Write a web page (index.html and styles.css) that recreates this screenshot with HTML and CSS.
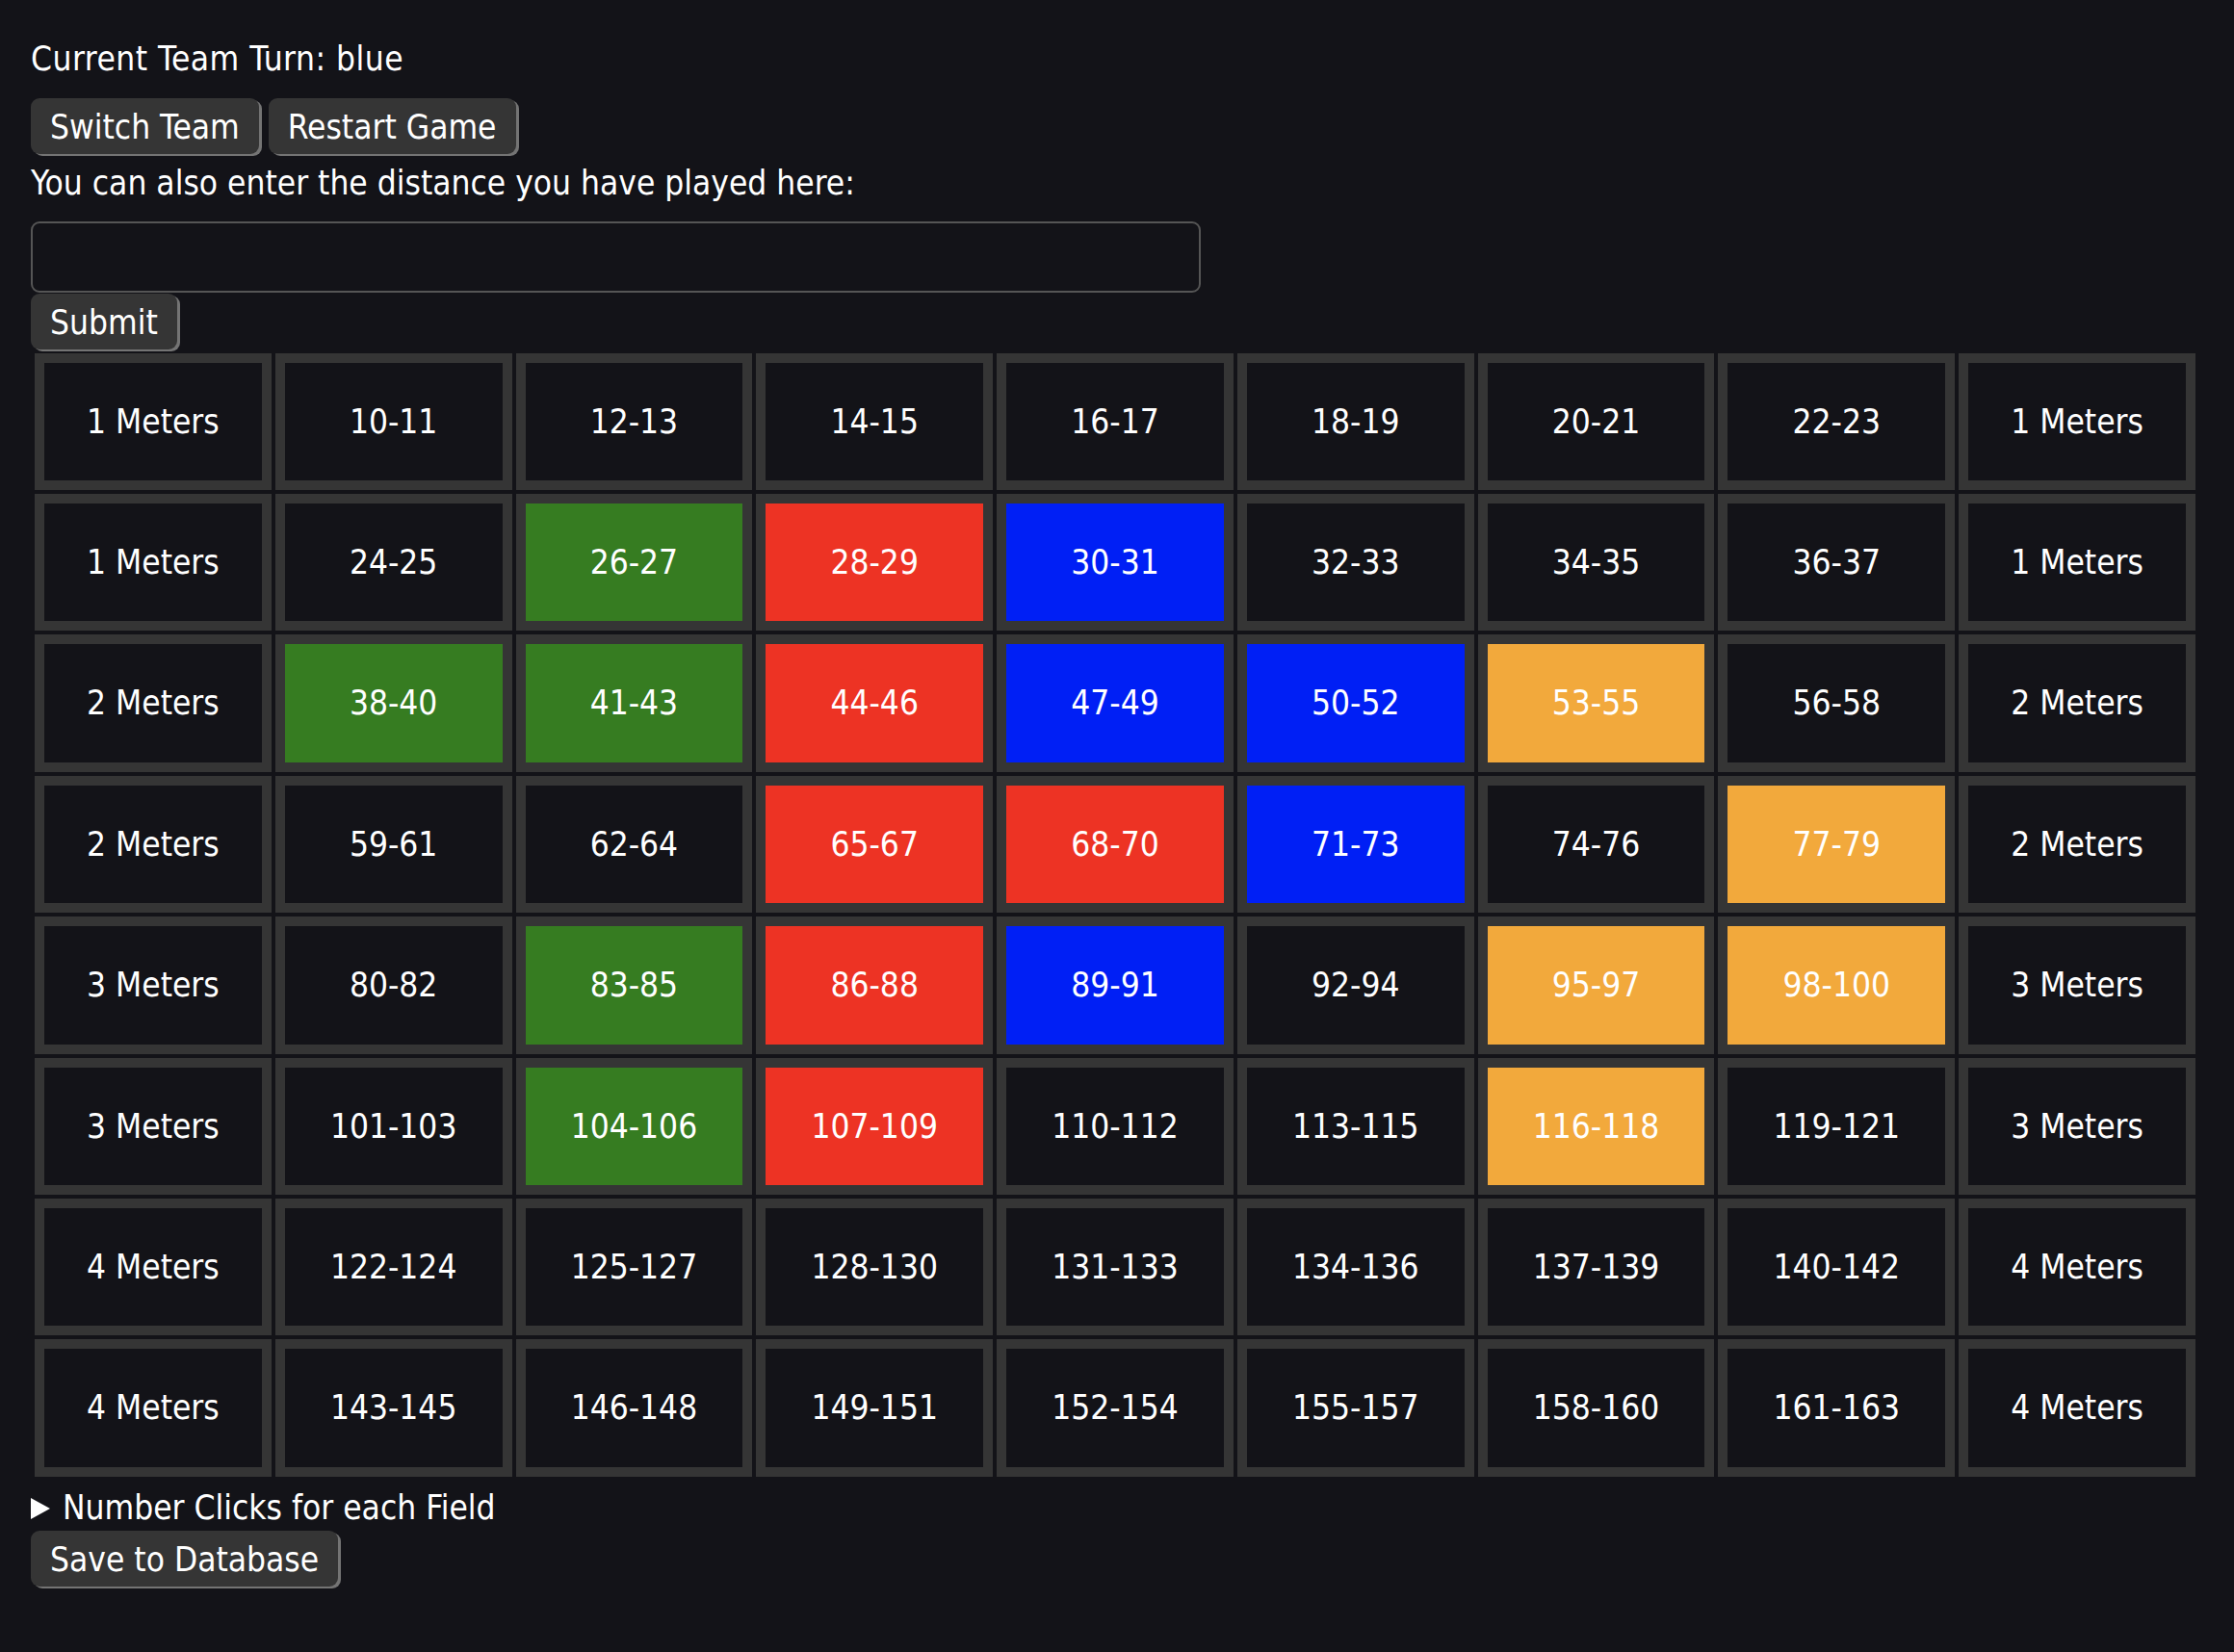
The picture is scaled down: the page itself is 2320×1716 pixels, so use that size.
FILE: index.html
```html
<!DOCTYPE html>
<html lang="en">
<head>
<meta charset="utf-8">
<title>Field Game</title>
<link rel="stylesheet" href="styles.css">
</head>
<body>
<main class="page">
  <div class="turn">Current Team Turn: blue</div>
  <div class="actions">
    <button class="btn">Switch Team</button> <button class="btn">Restart Game</button>
  </div>
  <div class="hint">You can also enter the distance you have played here:</div>
  <input class="distance" type="text">
  <div class="submit-row"><button class="btn">Submit</button></div>
  <table class="board">
    <tr><td>1 Meters</td><td>10-11</td><td>12-13</td><td>14-15</td><td>16-17</td><td>18-19</td><td>20-21</td><td>22-23</td><td>1 Meters</td></tr>
    <tr><td>1 Meters</td><td>24-25</td><td class="green">26-27</td><td class="red">28-29</td><td class="blue">30-31</td><td>32-33</td><td>34-35</td><td>36-37</td><td>1 Meters</td></tr>
    <tr><td>2 Meters</td><td class="green">38-40</td><td class="green">41-43</td><td class="red">44-46</td><td class="blue">47-49</td><td class="blue">50-52</td><td class="orange">53-55</td><td>56-58</td><td>2 Meters</td></tr>
    <tr><td>2 Meters</td><td>59-61</td><td>62-64</td><td class="red">65-67</td><td class="red">68-70</td><td class="blue">71-73</td><td>74-76</td><td class="orange">77-79</td><td>2 Meters</td></tr>
    <tr><td>3 Meters</td><td>80-82</td><td class="green">83-85</td><td class="red">86-88</td><td class="blue">89-91</td><td>92-94</td><td class="orange">95-97</td><td class="orange">98-100</td><td>3 Meters</td></tr>
    <tr><td>3 Meters</td><td>101-103</td><td class="green">104-106</td><td class="red">107-109</td><td>110-112</td><td>113-115</td><td class="orange">116-118</td><td>119-121</td><td>3 Meters</td></tr>
    <tr><td>4 Meters</td><td>122-124</td><td>125-127</td><td>128-130</td><td>131-133</td><td>134-136</td><td>137-139</td><td>140-142</td><td>4 Meters</td></tr>
    <tr><td>4 Meters</td><td>143-145</td><td>146-148</td><td>149-151</td><td>152-154</td><td>155-157</td><td>158-160</td><td>161-163</td><td>4 Meters</td></tr>
  </table>
  <details class="clicks">
    <summary>Number Clicks for each Field</summary>
  </details>
  <div class="save-row"><button class="btn">Save to Database</button></div>
</main>
</body>
</html>
```

FILE: styles.css
```css
html, body {
  margin: 0;
  background: #131318;
}

body {
  color: #ffffff;
  font-family: "DejaVu Sans Condensed", "DejaVu Sans", sans-serif;
  font-size: 35px;
  line-height: normal;
}

.page {
  padding: 41px 36px 40px 32px;
}

.turn {
  margin: 0;
  letter-spacing: 0.5px;
}

.actions {
  margin-top: 21px;
  margin-bottom: 9.5px;
}

.btn {
  font-family: inherit;
  font-size: 35px;
  color: #ffffff;
  background: #353535;
  border: none;
  border-radius: 9px;
  padding: 10px 20px 7px;
  line-height: 41px;
  box-shadow: 3px 2px 0 #747474;
  margin: 0;
  cursor: pointer;
}

.hint {
  margin: 0;
}

.distance {
  display: block;
  box-sizing: border-box;
  width: 1215px;
  height: 74px;
  margin: 20px 0 1px;
  background: #131318;
  border: 2px solid #555555;
  border-radius: 9px;
  color: #ffffff;
  font-family: inherit;
  font-size: 35px;
  padding: 0 12px;
}

.submit-row {
  line-height: 0;
}

.board {
  width: 100%;
  table-layout: fixed;
  border-spacing: 4px;
}

.board td {
  border: 10px solid #353535;
  background: #131318;
  text-align: center;
  color: #ffffff;
  line-height: 41px;
  padding: 41px 0 40.43px;
}

.board td.green { background: #367c21; }
.board td.red { background: #ed3324; }
.board td.blue { background: #001ff5; }
.board td.orange { background: #f2a93c; }

.clicks {
  margin-top: 8px;
}

.clicks summary {
  list-style: none;
  cursor: pointer;
}

.clicks summary::-webkit-details-marker {
  display: none;
}

.clicks summary::before {
  content: "";
  display: inline-block;
  width: 0;
  height: 0;
  border-left: 20px solid #ffffff;
  border-top: 11.5px solid transparent;
  border-bottom: 11.5px solid transparent;
  margin-right: 13px;
}

.save-row {
  margin-top: 4.5px;
}
```
